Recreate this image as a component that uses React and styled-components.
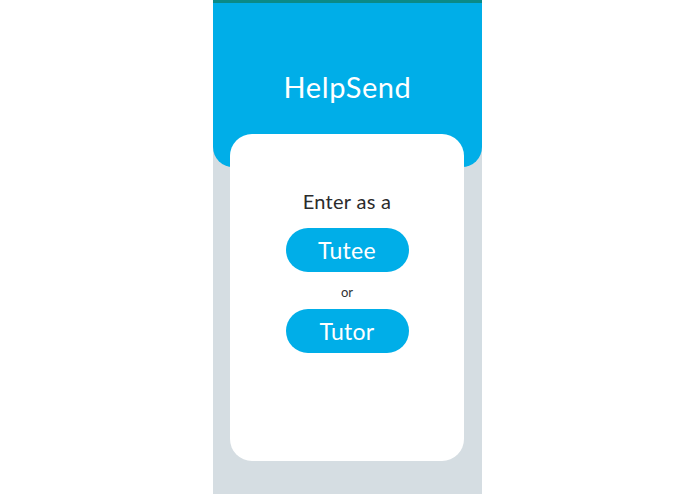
import React from 'react'
import styled, { createGlobalStyle } from 'styled-components';

const GlobalStyle = createGlobalStyle`
  html, body {
    margin:0;
    padding:0;
    background:#ffffff;
  }
  body {
    font-family:"Lato", "Open Sans", sans-serif;
  }
`;

export default function App() {
  return (
    <>
      <GlobalStyle />
      <Screen>
        <Header>
          <Title>HelpSend</Title>
        </Header>
        <Card>
          <Prompt>Enter as a</Prompt>
          <RoleButton>Tutee</RoleButton>
          <Or>or</Or>
          <RoleButton>Tutor</RoleButton>
        </Card>
      </Screen>
    </>
  )
}

const Screen = styled.div`
  width:269px;
  height:494px;
  margin:0 auto;
  background:#d5dde2;
  display:flex;
  flex-direction:column;
  overflow:hidden;
`;

const Header = styled.div`
  height:167px;
  flex-shrink:0;
  border-top:3px solid #0b8a87;
  background:#00aee8;
  border-radius:0 0 20px 20px;
  display:flex;
  justify-content:center;
  padding-top:67px;
  box-sizing:border-box;
`;

const Title = styled.h1`
  margin:0;
  color:#ffffff;
  font-weight:400;
  font-size:29px;
  line-height:34px;
  letter-spacing:0.6px;
`;

const Card = styled.div`
  margin:-33px 18px 0 17px;
  height:327px;
  flex-shrink:0;
  background:#ffffff;
  border-radius:22px;
  display:flex;
  flex-direction:column;
  align-items:center;
  padding-top:55px;
  box-sizing:border-box;
`;

const Prompt = styled.div`
  color:#2b2b2b;
  font-size:20px;
  line-height:24px;
  letter-spacing:0.3px;
  margin-bottom:15px;
`;

const RoleButton = styled.button`
  width:123px;
  height:44px;
  border:none;
  border-radius:22px;
  background:#00aee8;
  color:#ffffff;
  font-family:inherit;
  font-size:23px;
  letter-spacing:0.3px;
  cursor:pointer;
`;

const Or = styled.div`
  color:#333333;
  font-size:13px;
  line-height:16px;
  margin:12px 0 9px;
`;
